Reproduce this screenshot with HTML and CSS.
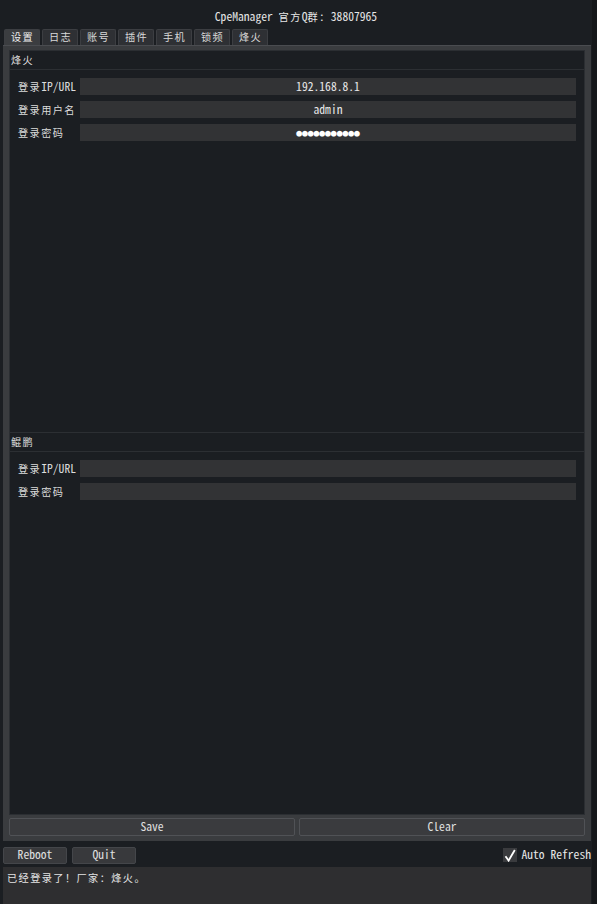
FILE: index.html
```html
<!DOCTYPE html>
<html lang="zh-CN">
<head>
    <meta charset="UTF-8">
    <title>CpeManager</title>
    <link rel="stylesheet" href="styles.css">
</head>
<body>
    <div class="window">
        <div class="titlebar">CpeManager <span class="zh">官方</span>Q<span class="zh">群：</span>38807965</div>

        <div class="tabs">
            <div class="tab active"><span class="zh">设置</span></div>
            <div class="tab"><span class="zh">日志</span></div>
            <div class="tab"><span class="zh">账号</span></div>
            <div class="tab"><span class="zh">插件</span></div>
            <div class="tab"><span class="zh">手机</span></div>
            <div class="tab"><span class="zh">锁频</span></div>
            <div class="tab"><span class="zh">烽火</span></div>
        </div>

        <div class="panel">
            <div class="content">
                <div class="section first">
                    <div class="section-head"><span class="zh">烽火</span></div>
                    <div class="rows">
                        <div class="row">
                            <span class="label"><span class="zh">登录</span>IP/URL</span>
                            <div class="field">192.168.8.1</div>
                        </div>
                        <div class="row">
                            <span class="label"><span class="zh">登录用户名</span></span>
                            <div class="field">admin</div>
                        </div>
                        <div class="row">
                            <span class="label"><span class="zh">登录密码</span></span>
                            <div class="field dots">●●●●●●●●●●●</div>
                        </div>
                    </div>
                </div>
                <div class="section">
                    <div class="section-head"><span class="zh">鲲鹏</span></div>
                    <div class="rows">
                        <div class="row">
                            <span class="label"><span class="zh">登录</span>IP/URL</span>
                            <div class="field"></div>
                        </div>
                        <div class="row">
                            <span class="label"><span class="zh">登录密码</span></span>
                            <div class="field"></div>
                        </div>
                    </div>
                </div>
            </div>
            <div class="actions">
                <button class="btn wide">Save</button>
                <button class="btn wide">Clear</button>
            </div>
        </div>

        <div class="toolbar">
            <button class="btn small">Reboot</button>
            <button class="btn small">Quit</button>
            <label class="check">
                <span class="box">
                    <svg width="12" height="13" viewBox="0 0 12 13">
                        <path d="M1.5 7.2 L4.6 11.6 L10.8 1" fill="none" stroke="#ffffff" stroke-width="1.8" stroke-linejoin="miter"/>
                    </svg>
                </span>
                Auto Refresh
            </label>
        </div>

        <div class="log"><span class="zh">已经登录了！厂家：烽火。</span></div>
    </div>
</body>
</html>
```

FILE: styles.css
```css
html, body {
    margin: 0;
    padding: 0;
}

body {
    width: 597px;
    height: 904px;
    overflow: hidden;
    background-color: #15171a;
    color: #dcdcdc;
    font-family: "Noto Sans Mono CJK SC", "DejaVu Sans Mono", "Noto Sans CJK SC", monospace;
    font-size: 11.6px;
    line-height: 1;
}

/* CJK glyphs drawn a bit smaller, on the same 2-column grid */
.zh {
    font-size: 10.2px;
    letter-spacing: 1.4px;
}

.window {
    width: 592px;
    height: 904px;
    background-color: #1b1e22;
    display: flex;
    flex-direction: column;
}

.titlebar {
    height: 29px;
    line-height: 33px;
    text-align: center;
    white-space: pre;
    color: #e6e6e6;
}

.tabs {
    display: flex;
    gap: 2px;
    padding-left: 4px;
    height: 16px;
}

.tab {
    width: 36px;
    height: 16px;
    display: flex;
    align-items: center;
    justify-content: center;
    padding-left: 1px;
    background-color: #2e3034;
    border: 1px solid #3c3e42;
    border-bottom: none;
    border-radius: 2px 2px 0 0;
    box-sizing: border-box;
    color: #d8d8d8;
}

.tab.active {
    background-color: #3b3d40;
    color: #eeeeee;
}

/* panel */
.panel {
    margin-left: 3px;
    width: 588px;
    height: 796px;
    box-sizing: border-box;
    background-color: #3a3c3f;
    border-top: 1px solid #4a4c50;
    padding: 4px 6px 5px 6px;
    display: flex;
    flex-direction: column;
}

.content {
    flex: 1;
    background-color: #1b1e22;
    border: 1px solid #2b2e32;
    display: flex;
    flex-direction: column;
}

.section.first {
    height: 381px;
    border-bottom: 1px solid #2c2f33;
}

.section-head {
    height: 18px;
    display: flex;
    align-items: center;
    padding-left: 1px;
    border-bottom: 1px solid #2c2f33;
}

.rows {
    display: flex;
    flex-direction: column;
    gap: 6px;
    padding: 8px 8px 0 8px;
}

.row {
    display: flex;
    align-items: center;
    height: 17px;
}

.label {
    width: 62px;
}

.field {
    flex: 1;
    height: 17px;
    background-color: #323335;
    display: flex;
    align-items: center;
    justify-content: center;
    color: #e8e8e8;
}

.field.dots {
    font-family: "DejaVu Sans Mono", monospace;
    font-size: 9.6px;
    color: #ffffff;
}

.actions {
    display: flex;
    gap: 4px;
    padding-top: 3px;
}

.btn {
    font: inherit;
    color: #e0e0e0;
    background-color: #3a3b3e;
    border: 1px solid #505256;
    border-radius: 2px;
    padding: 0;
    box-sizing: border-box;
}

.btn.wide {
    flex: 1;
    height: 18px;
}

/* bottom bar */
.toolbar {
    height: 26px;
    display: flex;
    align-items: center;
    gap: 5px;
    padding-left: 3px;
    padding-top: 2px;
    box-sizing: border-box;
}

.btn.small {
    width: 64px;
    height: 17px;
    background-color: #38393c;
    border-color: #44464a;
}

.check {
    margin-left: auto;
    margin-right: 1px;
    display: flex;
    align-items: center;
    gap: 4px;
    color: #e8e8e8;
}

.box {
    width: 14px;
    height: 14px;
    background-color: #3a3b3e;
    display: flex;
    align-items: center;
    justify-content: center;
}

.log {
    margin-left: 3px;
    width: 588px;
    flex: 1;
    background-color: #2e2e30;
    padding: 5px 4px;
    box-sizing: border-box;
    color: #e4e4e4;
}
```
